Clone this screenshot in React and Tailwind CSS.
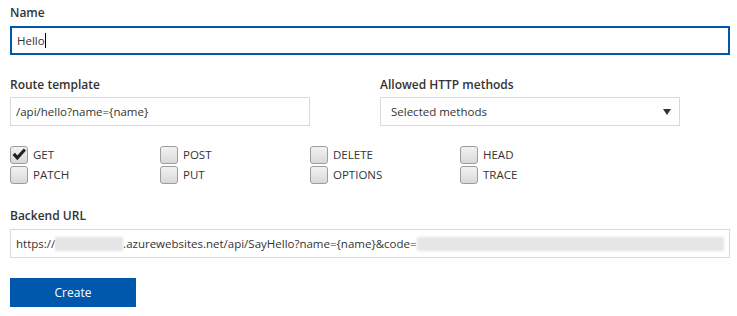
import React from "react";

const methods = ["GET", "POST", "DELETE", "HEAD", "PATCH", "PUT", "OPTIONS", "TRACE"];

const Checkbox = ({ label, checked }) => (
  <div className="flex items-center h-[20px]">
    <div className="relative w-[18px] h-[18px] rounded-[3px] border border-[#9c9c9c] bg-gradient-to-b from-[#f2f2f2] to-[#d9d9d9]">
      {checked && (
        <svg viewBox="0 0 18 18" className="absolute inset-[-1px] w-[18px] h-[18px]">
          <path d="M2.5 9 L5 6.8 L7.3 9.6 L13.8 2.5 L16 4.5 L7.3 14.2 Z" fill="#222" />
        </svg>
      )}
    </div>
    <span className="ml-[5px] text-[11.5px] text-[#333]">{label}</span>
  </div>
);

export default function App() {
  return (
    <div
      className="w-[737px] h-[316px] bg-white px-[10px] pt-[4px] text-[#333]"
      style={{ fontFamily: '"Open Sans", "Noto Sans", sans-serif' }}
    >
      {/* Name */}
      <div className="text-[12px] font-semibold leading-[18px]">Name</div>
      <div className="mt-[4px] w-[720px] h-[29px] border-2 border-[#0058ac] flex items-center px-[5px] text-[11.5px]">
        Hello<span className="w-px h-[15px] bg-black" />
      </div>

      {/* Route + methods */}
      <div className="mt-[21px] flex gap-[70px]">
        <div className="w-[300px]">
          <div className="text-[12px] font-semibold leading-[18px]">Route template</div>
          <div className="mt-[3px] h-[29px] border border-[#d9d9d9] flex items-center px-[5px] text-[11.5px]">
            /api/hello?name={"{name}"}
          </div>
        </div>
        <div className="w-[300px]">
          <div className="text-[12px] font-semibold leading-[18px]">Allowed HTTP methods</div>
          <div className="mt-[3px] h-[29px] border border-[#d9d9d9] flex items-center justify-between pl-[10px] pr-[8px] text-[11.5px]">
            <span>Selected methods</span>
            <svg viewBox="0 0 8 8" className="w-[8px] h-[8px]">
              <path d="M0 1 L8 1 L4 7 Z" fill="#333" />
            </svg>
          </div>
        </div>
      </div>

      {/* Checkboxes */}
      <div className="mt-[19px] grid grid-cols-[150px_150px_150px_150px]">
        {methods.map((m, i) => (
          <Checkbox key={m} label={m} checked={i === 0} />
        ))}
      </div>

      {/* Backend URL */}
      <div className="mt-[22px] text-[12px] font-semibold leading-[18px]">Backend URL</div>
      <div className="mt-[4px] w-[720px] h-[29px] border border-[#d9d9d9] flex items-center px-[5px] text-[11.5px] overflow-hidden whitespace-nowrap">
        https://
        <span className="inline-block w-[68px] h-[14px] bg-[#e4e4e4] blur-[1px]" />
        .azurewebsites.net/api/SayHello?name={"{name}"}&amp;code=
        <span className="inline-block w-[308px] h-[14px] bg-[#e6e6e6] blur-[1px]" />
      </div>

      {/* Create */}
      <button className="mt-[20px] w-[126px] h-[29px] bg-[#0058ac] text-white text-[12px]">
        Create
      </button>
    </div>
  );
}
